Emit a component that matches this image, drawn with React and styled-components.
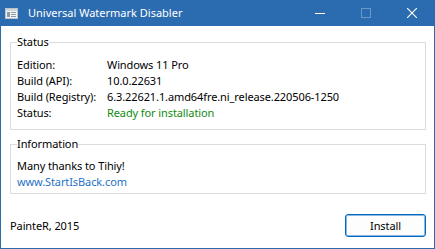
import React from "react";
import styled, { createGlobalStyle } from "styled-components";

const GlobalStyle = createGlobalStyle`
  html, body {
    margin: 0;
    padding: 0;
    background: #ffffff;
  }
`;

const font = `"Noto Sans", "Liberation Sans", sans-serif`;

// window frame
const Window = styled.div`
  width: 435px;
  height: 249px;
  box-sizing: border-box;
  display: flex;
  flex-direction: column;
  background: #ffffff;
  border: 1px solid #2b6cb0;
  border-top: none;
  font-family: ${font};
  font-size: 11px;
  letter-spacing: -0.1px;
  color: #000;
`;

const TitleBar = styled.div`
  height: 26px;
  margin: 0 -1px;
  display: flex;
  align-items: center;
  background: #2b6cb0;
  color: #ffffff;
`;

const AppIcon = styled.svg`
  margin: 0 10px 0 5px;
  flex: none;
`;

const Title = styled.div`
  flex: 1;
  font-size: 11px;
  letter-spacing: 0;
  line-height: 26px;
`;

const CaptionButton = styled.div`
  width: 46px;
  height: 26px;
  display: flex;
  align-items: center;
  justify-content: center;
  opacity: ${(p) => (p.disabled ? 0.3 : 1)};
`;

const Body = styled.div`
  flex: 1;
  display: flex;
  flex-direction: column;
  padding: 8px 8px 11px 9px;
`;

const Group = styled.fieldset`
  margin: 0 0 ${(p) => p.$gap || 0}px 0;
  padding: ${(p) => p.$pad || "7px 6px 8px 6px"};
  border: 1px solid #dcdcdc;
  min-width: 0;
`;

const Legend = styled.legend`
  padding: 0;
  line-height: 16px;
  margin-left: 0;
`;

const Grid = styled.div`
  display: grid;
  grid-template-columns: 90px 1fr;
  line-height: 16px;
  white-space: nowrap;
`;

const Value = styled.span`
  color: ${(p) => p.$color || "inherit"};
`;

const Line = styled.div`
  line-height: 16px;
  color: ${(p) => p.$color || "inherit"};
`;

const Footer = styled.div`
  margin-top: auto;
  display: flex;
  align-items: center;
  justify-content: space-between;
`;

const Credit = styled.span`
  line-height: 16px;
`;

const Button = styled.button`
  width: 81px;
  height: 23px;
  box-sizing: border-box;
  border: 1px solid #0067c0;
  box-shadow: inset 0 0 0 1px rgba(0, 103, 192, 0.45);
  border-radius: 3px;
  background: #fdfdfd;
  font-family: ${font};
  font-size: 11px;
  letter-spacing: -0.1px;
  color: #000;
  padding: 0;
`;

export default function App() {
  return (
    <>
      <GlobalStyle />
      <Window>
        <TitleBar>
          <AppIcon width="13" height="11" viewBox="0 0 13 11">
            <rect x="0.5" y="0.5" width="12" height="10" fill="#f4f4f4" stroke="#b9c4d0" />
            <rect x="1" y="1" width="11" height="2" fill="#d0d6dc" />
            <rect x="2" y="4" width="3" height="5" fill="#8c9aa8" />
            <rect x="6" y="4" width="5" height="1" fill="#8c9aa8" />
            <rect x="6" y="6" width="5" height="1" fill="#8c9aa8" />
            <rect x="6" y="8" width="5" height="1" fill="#8c9aa8" />
          </AppIcon>
          <Title>Universal Watermark Disabler</Title>
          <CaptionButton>
            <svg width="10" height="10" viewBox="0 0 10 10">
              <rect x="0" y="5" width="10" height="1" fill="#fff" />
            </svg>
          </CaptionButton>
          <CaptionButton disabled>
            <svg width="10" height="10" viewBox="0 0 10 10">
              <rect x="0.5" y="0.5" width="9" height="9" fill="none" stroke="#fff" />
            </svg>
          </CaptionButton>
          <CaptionButton>
            <svg width="10" height="10" viewBox="0 0 10 10">
              <path d="M0 0 L10 10 M10 0 L0 10" stroke="#fff" strokeWidth="1.1" />
            </svg>
          </CaptionButton>
        </TitleBar>
        <Body>
          <Group $gap={6}>
            <Legend>Status</Legend>
            <Grid>
              <span>Edition:</span>
              <Value>Windows 11 Pro</Value>
              <span>Build (API):</span>
              <Value>10.0.22631</Value>
              <span>Build (Registry):</span>
              <Value>6.3.22621.1.amd64fre.ni_release.220506-1250</Value>
              <span>Status:</span>
              <Value $color="#108a10">Ready for installation</Value>
            </Grid>
          </Group>
          <Group $pad="6px 6px 3px 6px">
            <Legend>Information</Legend>
            <Line>Many thanks to Tihiy!</Line>
            <Line $color="#2672c8">www.StartIsBack.com</Line>
          </Group>
          <Footer>
            <Credit>PainteR, 2015</Credit>
            <Button>Install</Button>
          </Footer>
        </Body>
      </Window>
    </>
  );
}
